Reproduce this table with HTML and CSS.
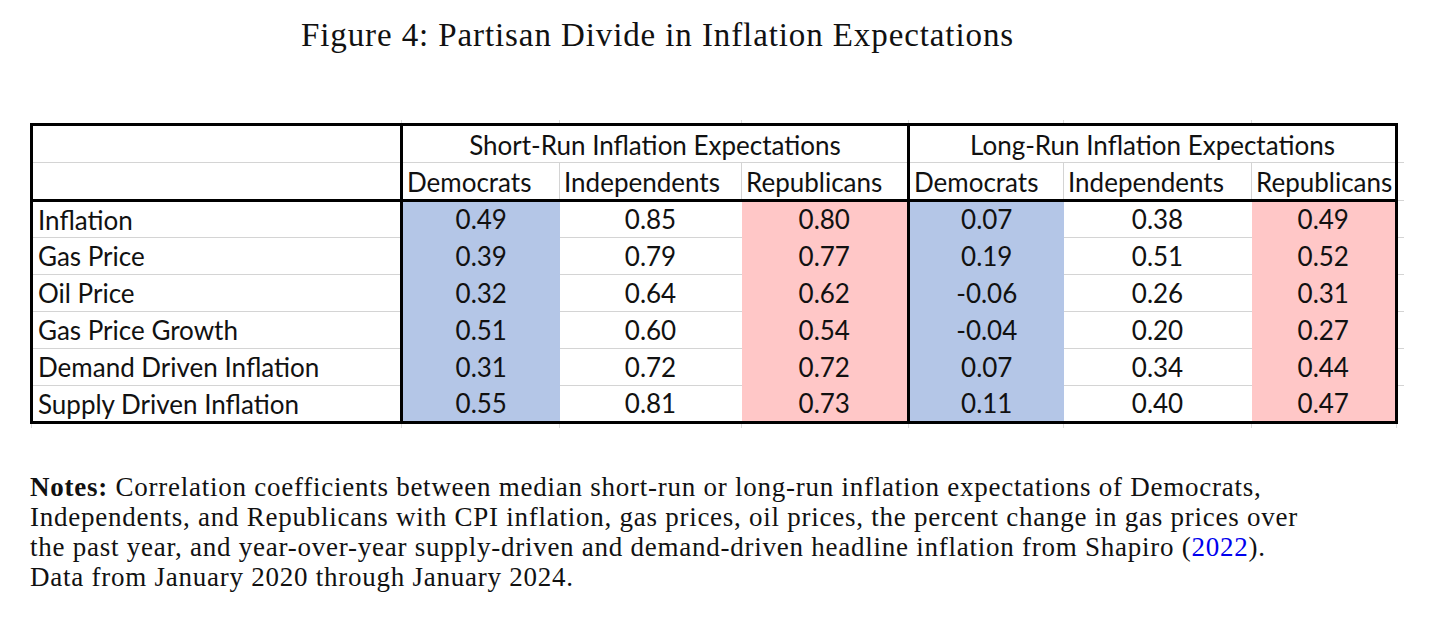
FILE: index.html
```html
<!DOCTYPE html>
<html>
<head>
<meta charset="utf-8">
<link rel="stylesheet" href="styles.css">
</head>
<body>
<div class="page">
  <h1 class="title">Figure 4: Partisan Divide in Inflation Expectations</h1>
  <table class="grid">
    <colgroup>
      <col class="w-label"><col class="w-c1"><col class="w-c2"><col class="w-c3"><col class="w-c4"><col class="w-c5"><col class="w-c6"><col class="w-ghost">
    </colgroup>
    <tr class="ghost-top">
      <td></td><td class="gv"></td><td class="gv"></td><td class="gv"></td><td class="gv"></td><td class="gv"></td><td class="gv"></td><td></td>
    </tr>
    <tr class="hrow h1">
      <td class="lab top left sep-b"></td>
      <td class="grp top thick-l sep-b" colspan="3">Short-Run Inflation Expectations</td>
      <td class="grp top thick-l thick-r sep-b" colspan="3">Long-Run Inflation Expectations</td>
      <td class="ghost gh"></td>
    </tr>
    <tr class="hrow h2">
      <td class="lab left"></td>
      <td class="sub thick-l gr">Democrats</td>
      <td class="sub gr">Independents</td>
      <td class="sub">Republicans</td>
      <td class="sub thick-l gr">Democrats</td>
      <td class="sub gr">Independents</td>
      <td class="sub thick-r">Republicans</td>
      <td class="ghost gh"></td>
    </tr>
    <tr class="drow first">
      <td class="lab left">Inflation</td>
      <td class="num blue thick-l">0.49</td><td class="num white">0.85</td><td class="num pink">0.80</td>
      <td class="num blue thick-l">0.07</td><td class="num white">0.38</td><td class="num pink thick-r">0.49</td>
      <td class="ghost gh"></td>
    </tr>
    <tr class="drow">
      <td class="lab left">Gas Price</td>
      <td class="num blue thick-l">0.39</td><td class="num white">0.79</td><td class="num pink">0.77</td>
      <td class="num blue thick-l">0.19</td><td class="num white">0.51</td><td class="num pink thick-r">0.52</td>
      <td class="ghost gh"></td>
    </tr>
    <tr class="drow">
      <td class="lab left">Oil Price</td>
      <td class="num blue thick-l">0.32</td><td class="num white">0.64</td><td class="num pink">0.62</td>
      <td class="num blue thick-l">-0.06</td><td class="num white">0.26</td><td class="num pink thick-r">0.31</td>
      <td class="ghost gh"></td>
    </tr>
    <tr class="drow">
      <td class="lab left">Gas Price Growth</td>
      <td class="num blue thick-l">0.51</td><td class="num white">0.60</td><td class="num pink">0.54</td>
      <td class="num blue thick-l">-0.04</td><td class="num white">0.20</td><td class="num pink thick-r">0.27</td>
      <td class="ghost gh"></td>
    </tr>
    <tr class="drow">
      <td class="lab left">Demand Driven Inflation</td>
      <td class="num blue thick-l">0.31</td><td class="num white">0.72</td><td class="num pink">0.72</td>
      <td class="num blue thick-l">0.07</td><td class="num white">0.34</td><td class="num pink thick-r">0.44</td>
      <td class="ghost gh"></td>
    </tr>
    <tr class="drow last">
      <td class="lab left bot">Supply Driven Inflation</td>
      <td class="num blue thick-l bot">0.55</td><td class="num white bot">0.81</td><td class="num pink bot">0.73</td>
      <td class="num blue thick-l bot">0.11</td><td class="num white bot">0.40</td><td class="num pink thick-r bot">0.47</td>
      <td class="ghost"></td>
    </tr>
    <tr class="ghost-bot">
      <td class="gv"></td><td class="gv"></td><td class="gv"></td><td class="gv"></td><td class="gv"></td><td class="gv"></td><td class="gv"></td><td class="gv"></td>
    </tr>
  </table>
  <p class="notes"><b>Notes:</b> Correlation coefficients between median short-run or long-run inflation expectations of Democrats,<br>Independents, and Republicans with CPI inflation, gas prices, oil prices, the percent change in gas prices over<br>the past year, and year-over-year supply-driven and demand-driven headline inflation from Shapiro (<span class="cite">2022</span>).<br>Data from January 2020 through January 2024.</p>
</div>
</body>
</html>
```
FILE: styles.css
```css
html, body {
  margin: 0;
  padding: 0;
  background: #ffffff;
}
.page {
  width: 1255px;
  padding-left: 30px;
  padding-top: 16px;
}
.title {
  margin: 0;
  text-align: center;
  font-family: "Liberation Serif", "DejaVu Serif", serif;
  font-weight: normal;
  font-size: 33px;
  letter-spacing: 0.9px;
  line-height: 38px;
  color: #111;
  white-space: nowrap;
}
.grid {
  width: 1372px;
  margin-top: 66px;
  border-collapse: collapse;
  table-layout: fixed;
  font-family: Lato, "Open Sans", sans-serif;
  font-size: 26px;
  color: #111;
}
.w-label { width: 370px; }
.w-c1 { width: 158px; }
.w-c2 { width: 182px; }
.w-c3 { width: 167px; }
.w-c4 { width: 155px; }
.w-c5 { width: 188px; }
.w-c6 { width: 145px; }
.w-ghost { width: 7px; }
.grid td {
  padding: 0;
  white-space: nowrap;
  overflow: visible;
  vertical-align: middle;
}
.ghost-top { height: 4px; }
.ghost-bot { height: 6px; }
.grid .gv { border-left: 1px solid #dcdcdc; }
.hrow { height: 38px; }
.drow { height: 37px; }
.grid td.top { border-top: 3px solid #000; }
.grid td.left { border-left: 3px solid #000; }
.grid td.bot { border-bottom: 3px solid #000; }
.grid td.thick-l { border-left: 3px solid #000; }
.grid td.thick-r { border-right: 3px solid #000; }
.grid td.sep-b { border-bottom: 1px solid #d4d4d4; }
.grid td.gr { border-right: 1px solid #d4d4d4; }
.grid .h2 td { border-bottom: 3px solid #000; }
.grid .h2 td.ghost, .grid td.ghost.gh { border-bottom: 1px solid #d4d4d4; }
.grid td.grp { text-align: center; padding-top: 2px; }
.grid td.sub { text-align: left; padding-left: 4px; padding-top: 2px; }
.grid td.lab { text-align: left; padding-left: 5px; padding-top: 1px; }
.grid td.num { text-align: center; padding-top: 0; }
.grid .drow td.lab, .grid .drow td.white { border-bottom: 1px solid #d4d4d4; }
.grid .drow.last td.lab, .grid .drow.last td.white { border-bottom: 3px solid #000; }
.blue { background: #b4c6e7; }
.pink { background: #ffc7c7; }
.white { background: #fff; }
.notes {
  margin: 44px 0 0 0;
  font-family: "Liberation Serif", "DejaVu Serif", serif;
  font-size: 27px;
  letter-spacing: 0.75px;
  line-height: 30px;
  color: #111;
  white-space: nowrap;
}
.notes b { font-weight: bold; }
.cite { color: #0000ee; }
```
